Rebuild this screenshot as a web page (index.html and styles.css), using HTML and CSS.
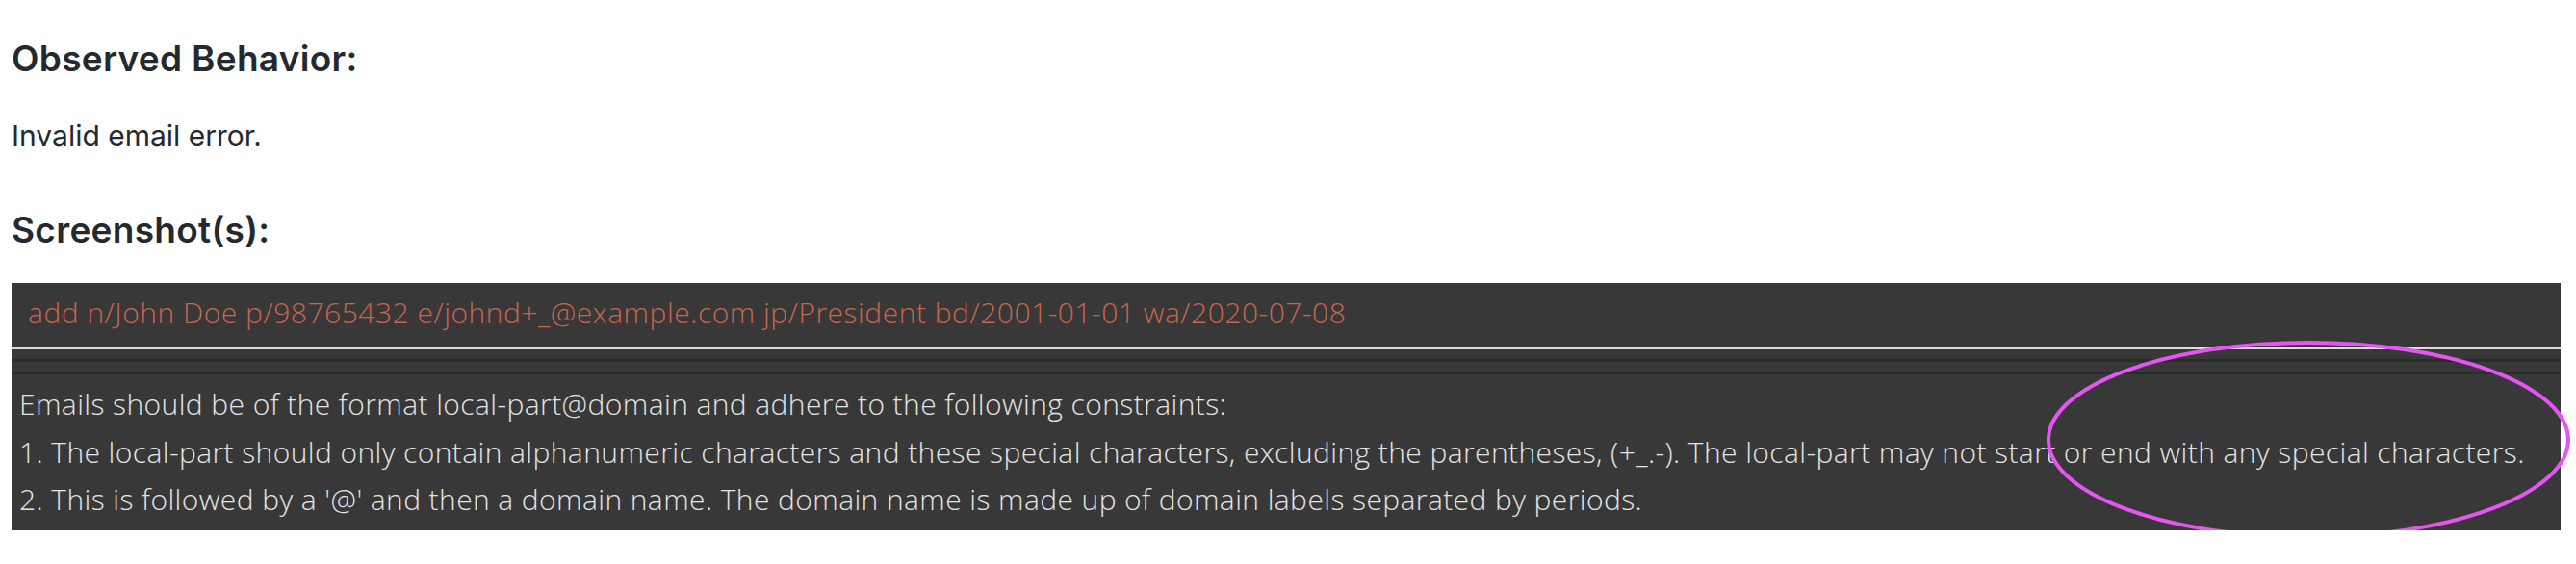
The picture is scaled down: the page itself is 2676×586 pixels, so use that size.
FILE: index.html
```html
<!DOCTYPE html>
<html lang="en">
<head>
<meta charset="utf-8">
<title>Observed Behavior</title>
<link rel="stylesheet" href="styles.css">
</head>
<body>
<main class="page">
  <h3 class="heading">Observed Behavior:</h3>
  <p class="body-text">Invalid email error.</p>
  <h3 class="heading heading-second">Screenshot(s):</h3>
  <div class="app-shot">
    <div class="command-box">
      <span class="command-text">add n/John Doe p/98765432 e/johnd+_@example.com jp/President bd/2001-01-01 wa/2020-07-08</span>
    </div>
    <div class="divider"></div>
    <div class="result-box">
      <div class="band"></div>
      <div class="band-line"></div>
      <div class="band"></div>
      <div class="band-line"></div>
      <div class="result-text">
        <p class="result-line">Emails should be of the format local-part@domain and adhere to the following constraints:</p>
        <p class="result-line">1. The local-part should only contain alphanumeric characters and these special characters, excluding the parentheses, (+_.-). The local-part may not start or end with any special characters.</p>
        <p class="result-line">2. This is followed by a '@' and then a domain name. The domain name is made up of domain labels separated by periods.</p>
      </div>
    </div>
    <svg class="annotation" width="548" height="210" viewBox="0 0 548 210" aria-hidden="true">
      <ellipse cx="274" cy="104" rx="270" ry="101" fill="none" stroke="#e455f2" stroke-width="4"/>
    </svg>
  </div>
</main>
</body>
</html>
```

FILE: styles.css
```css
html, body {
  margin: 0;
  padding: 0;
  background: #ffffff;
}

.page {
  padding: 38px 16px 0 12px;
  color: #24292e;
  font-family: Inter, "Liberation Sans", sans-serif;
}

.heading {
  margin: 0;
  font-size: 37px;
  line-height: 46px;
  font-weight: 600;
  letter-spacing: 0.3px;
}

.body-text {
  margin: 37px 0 0 0;
  font-size: 30px;
  line-height: 40px;
  font-weight: 400;
}

.heading-second {
  margin-top: 55px;
}

.app-shot {
  position: relative;
  margin-top: 32px;
  background: #383838;
  font-family: "Open Sans", "Liberation Sans", sans-serif;
  font-weight: 300;
}

.command-box {
  height: 67px;
  box-sizing: border-box;
  padding: 11px 0 0 17px;
  font-size: 30px;
  line-height: 40px;
  letter-spacing: 0.5px;
}

.command-text {
  color: #c8654f;
  white-space: nowrap;
}

.divider {
  height: 2px;
  background: #dcdcdc;
}

.result-box {
  display: flex;
  flex-direction: column;
}

.band {
  height: 10px;
  background: #383838;
}

.band-line {
  height: 3px;
  background: #2b2b2b;
}

.result-text {
  padding: 6px 0 7.5px 8px;
}

.result-line {
  margin: 0;
  color: #e4e4e4;
  font-size: 30px;
  line-height: 49.5px;
  letter-spacing: 0.4px;
  white-space: nowrap;
}

.annotation {
  position: absolute;
  left: 2112px;
  top: 59px;
  overflow: visible;
}
```
